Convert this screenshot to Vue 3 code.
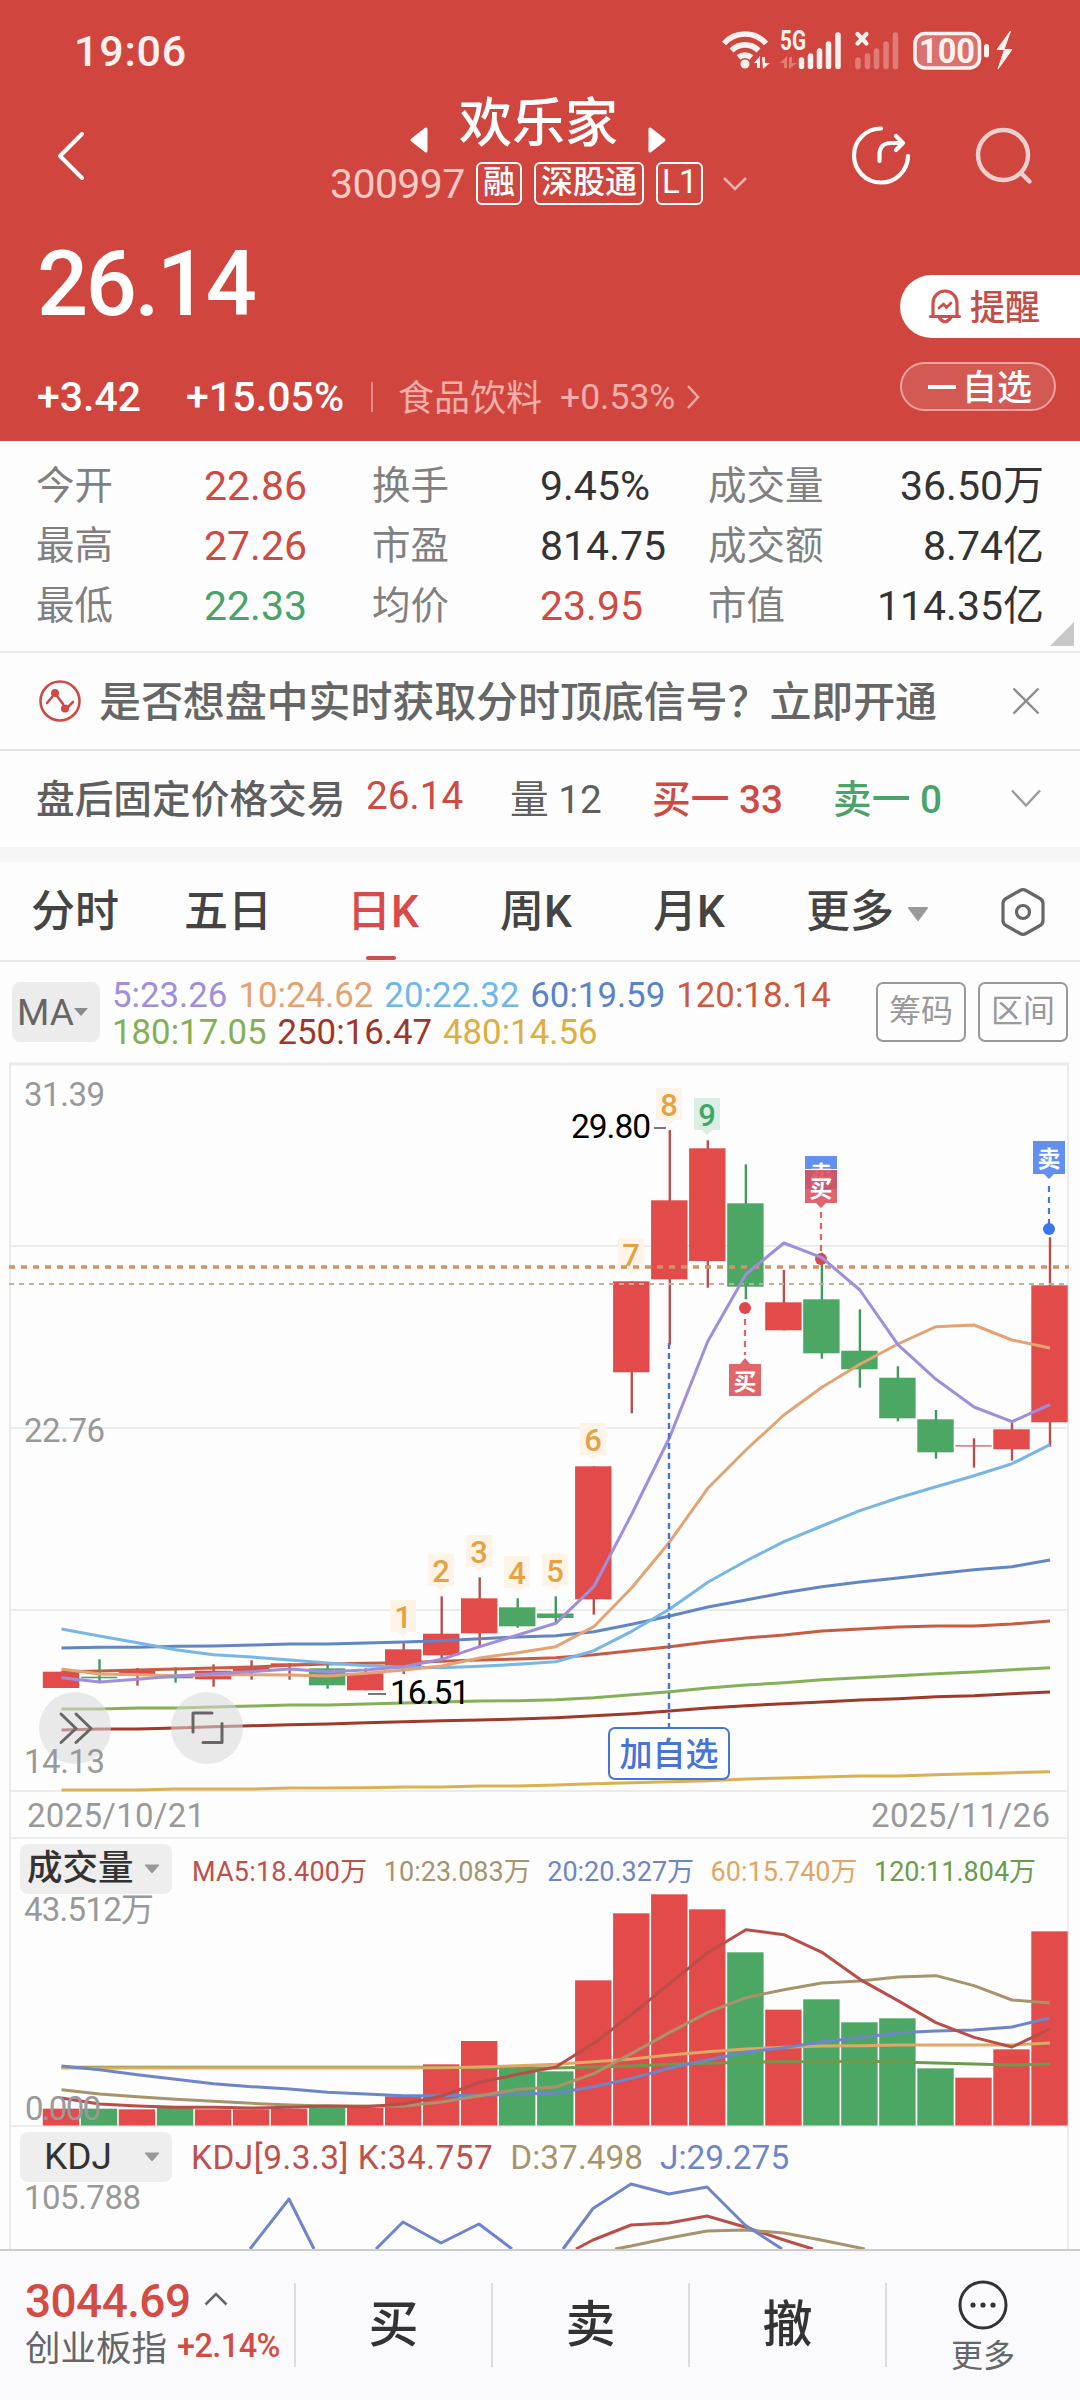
<template>
  <div class="page">
    <header class="hero">
      <div class="statusbar">
        <span class="clock">19:06</span>
        <svg class="status-icons" width="302" height="60" viewBox="0 0 302 60">
          <g fill="none" stroke="#fff1ef" stroke-width="5.6">
            <path d="M4 23.500a28 28 0 0 1 42 0" />
            <path d="M11.500 30.500a19 19 0 0 1 27 0" />
            <path d="M18.500 37.500a10 10 0 0 1 13 0" />
          </g>
          <circle cx="25" cy="44" r="4.500" fill="#fff1ef" />
          <path d="M34 43l6-7v12h-3v-5zM42 37h3v6h5l-7 6z" fill="#fff1ef" />
          <text x="60" y="30" class="net" textLength="26" lengthAdjust="spacingAndGlyphs">5G</text>
          <path d="M60 43l7-7v12h-3v-5zM69 37h3v6h5l-8 6z" fill="#e17b75" />
          <g stroke="#fff1ef" stroke-width="5.500" stroke-linecap="round">
            <path d="M81.500 40v6.500M90.500 36v10.500M99.500 31v15.500M108.500 24v22.500M118 15v31.500" />
          </g>
          <path d="M137.500 14l9 9.500M146.500 14l-9 9.500" stroke="#fff1ef" stroke-width="4.200" stroke-linecap="round" />
          <g stroke="#e17b75" stroke-width="5.500" stroke-linecap="round">
            <path d="M138 40v6.500M147.500 36v10.500M156.500 31v15.500M166 24v22.500M175.500 15v31.500" />
          </g>
          <rect x="195" y="13.500" width="64.500" height="34.500" rx="10" fill="#d9726c" stroke="#fff1ef" stroke-width="3.600" />
          <text x="199" y="42.500" class="bat" textLength="56" lengthAdjust="spacingAndGlyphs">100</text>
          <rect x="264" y="24" width="5" height="13.500" rx="2.500" fill="#fff1ef" />
          <path d="M290.500 11l-13.500 18.500h7.500l-6.500 19.500 14-19.500h-8z" fill="#fff1ef" stroke="#fff1ef" />
        </svg>
      </div>

      <div class="navbar">
        <svg class="back" width="32" height="54" viewBox="0 0 32 54">
          <path d="M27 5L5 27l22 22" fill="none" stroke="#fff" stroke-width="4" stroke-linecap="round" stroke-linejoin="round" />
        </svg>
        <div class="title">
          <div class="title-name">
            <svg width="20" height="30" viewBox="0 0 20 30"><path d="M17 4v22L3 15z" fill="#fff" stroke="#fff" stroke-width="3" stroke-linejoin="round" /></svg>
            <span>欢乐家</span>
            <svg width="20" height="30" viewBox="0 0 20 30"><path d="M3 4v22l14-11z" fill="#fff" stroke="#fff" stroke-width="3" stroke-linejoin="round" /></svg>
          </div>
          <div class="title-code">
            <span class="code">300997</span>
            <span class="tag">融</span>
            <span class="tag">深股通</span>
            <span class="tag latin">L1</span>
            <svg class="code-arrow" width="26" height="16" viewBox="0 0 26 16"><path d="M2 2l11 11L24 2" fill="none" stroke="#eeb1ad" stroke-width="2.500" /></svg>
          </div>
        </div>
        <svg class="share" width="60" height="60" viewBox="0 0 60 60">
          <g fill="none" stroke="#fff" stroke-width="4.200" stroke-linecap="round" stroke-linejoin="round">
            <path d="M31 3.500A27 27 0 1 0 58 31" />
            <path d="M29.500 36v-6q0-12 12-12h11M46 11l7 7-7 7" />
          </g>
        </svg>
        <svg class="search" width="60" height="60" viewBox="0 0 60 60">
          <g fill="none" stroke="#ecd0ce" stroke-width="4.400" stroke-linecap="round">
            <circle cx="29" cy="29" r="25" />
            <path d="M47 47l8.500 8.500" />
          </g>
        </svg>
      </div>

      <div class="quote">
        <div class="quote-left">
          <div class="price">26.14</div>
          <div class="change">
            <span class="chg">+3.42</span>
            <span class="pct">+15.05%</span>
            <i class="sep"></i>
            <span class="industry">食品饮料</span>
            <span class="industry-pct">+0.53%</span>
            <svg width="14" height="26" viewBox="0 0 14 26"><path d="M2 2l10 11L2 24" fill="none" stroke="#f2aaa6" stroke-width="2.500" /></svg>
          </div>
        </div>
        <div class="quote-right">
          <div class="alert">
            <svg width="34" height="38" viewBox="0 0 34 38">
              <g fill="none" stroke="#cd504b" stroke-width="3.200" stroke-linejoin="round" stroke-linecap="round">
                <path d="M2.500 28.500h29M5 28V15a12 12 0 0 1 24 0v13" />
                <path d="M11.500 30q5.500 7.500 11 0" />
                <path d="M11 20l4.500-4 3 3.500 4.500-4.500" stroke-width="2.800" />
              </g>
            </svg>
            <span>提醒</span>
          </div>
          <div class="fav"><i></i><span>自选</span></div>
        </div>
      </div>
    </header>

    <section class="stats">
      <template v-for="s in stats" :key="s.label">
        <span class="stat-label">{{ s.label }}</span>
        <span class="stat-value" :class="s.cls">{{ s.value }}</span>
      </template>
      <svg class="corner" width="24" height="24" viewBox="0 0 24 24"><path d="M24 0v24H0z" fill="#c8c8c8" /></svg>
    </section>

    <section class="notice">
      <svg width="42" height="42" viewBox="0 0 42 42">
        <g fill="none" stroke="#cf4a46" stroke-width="2.600" stroke-linecap="round">
          <circle cx="21" cy="21" r="19.500" />
          <path d="M8 23l5-6M18 16l6 8M29 27l5-5" />
        </g>
        <circle cx="16" cy="13" r="4" fill="#cf4a46" />
        <circle cx="26" cy="28.500" r="4" fill="#cf4a46" />
      </svg>
      <span class="notice-text">是否想盘中实时获取分时顶底信号？立即开通</span>
      <svg width="28" height="28" viewBox="0 0 28 28"><path d="M1.500 1.500l25 25M26.500 1.500l-25 25" stroke="#8c8c8c" stroke-width="2.400" /></svg>
    </section>

    <section class="after">
      <span class="after-name">盘后固定价格交易</span>
      <span class="after-price red">26.14</span>
      <span class="after-vol">量 12</span>
      <span class="after-buy red">买一 33</span>
      <span class="after-sell green">卖一 0</span>
      <svg width="30" height="20" viewBox="0 0 30 20"><path d="M1 1.500l14 15 14-15" fill="none" stroke="#9a9a9a" stroke-width="2.400" /></svg>
    </section>

    <nav class="tabs">
      <span v-for="t in tabs" :key="t" class="tab" :class="{ active: t === '日K' }">{{ t }}</span>
      <svg class="tab-arrow" width="22" height="14" viewBox="0 0 22 14"><path d="M2 1h18l-9 12z" fill="#999" stroke="#999" stroke-width="2" stroke-linejoin="round" /></svg>
      <svg class="gear" width="46" height="50" viewBox="0 0 46 50">
        <g fill="none" stroke="#666" stroke-width="3.200" stroke-linejoin="round">
          <path d="M20 3.500q3-1.700 6 0l14 8q3 1.700 3 5v17q0 3.300-3 5l-14 8q-3 1.700-6 0l-14-8q-3-1.700-3-5v-17q0-3.300 3-5z" />
          <circle cx="23" cy="25" r="6.500" />
        </g>
      </svg>
    </nav>

    <section class="ma">
      <div class="ma-select">MA<svg width="14" height="10" viewBox="0 0 14 10"><path d="M0 1h14L7 9z" fill="#8a8a8a" /></svg></div>
      <div class="ma-list">
        <span v-for="m in maList" :key="m.text" :style="{ color: m.color }">{{ m.text }}</span>
      </div>
      <span class="ma-btn">筹码</span>
      <span class="ma-btn">区间</span>
    </section>

    <!-- 主图 -->
    <svg class="chart" width="1080" height="776" viewBox="0 1063 1080 776">
      <g class="grid">
        <path d="M10 1064H1069" stroke-width="3" />
        <path d="M10 1246H1068M10 1428H1068M10 1610H1068M10 1791H1068M10 1838H1068M10 1063V1839M1068 1063V1839" />
      </g>
      <g v-for="(c, i) in candles" :key="i">
        <rect :x="cx(i) - 1.200" :y="c[3]" width="2.400" :height="c[4] - c[3]" :fill="c[0] ? '#b9504e' : '#419a59'" />
        <rect :x="cx(i) - 18.700" :y="c[1]" width="36.400" :height="c[2] - c[1]" :fill="c[0] ? '#e34a4a' : '#4ca765'" />
      </g>
      <g v-for="f in flags" :key="f.n">
        <path :d="`M${f.x - 13} ${f.y}h26v32h-8l-5 5-5-5h-8z`" :fill="f.n === 9 ? '#d9efe2' : '#fdf4e7'" />
        <text :x="f.x" :y="f.y + 28" class="flag" :fill="f.n === 9 ? '#41a662' : '#e5a245'">{{ f.n }}</text>
      </g>
      <path d="M9 1267H1069" stroke="#d39464" stroke-width="3.400" stroke-dasharray="6 6" />
      <path d="M9 1284H1069" stroke="#c0b294" stroke-width="2" stroke-dasharray="5 5" />
      <circle cx="821" cy="1259" r="6" fill="#d9484b" />
      <path d="M821 1212v44" class="dash" stroke="#d9666a" />
      <polyline v-for="l in maLines" :key="l.color" :points="line(l.y)" :stroke="l.color" class="line" />

      <path d="M669 1343V1727" stroke="#4674d8" stroke-width="2.400" stroke-dasharray="6 4" />
      <rect x="609" y="1728" width="120" height="51" rx="6" fill="#fff" stroke="#4674d8" stroke-width="2" />
      <text x="669" y="1766" class="added" text-anchor="middle">加自选</text>

      <path d="M654 1128h12" stroke="#777" stroke-width="2" />
      <text x="571" y="1138" class="peak" textLength="80">29.80</text>
      <path d="M368 1694h18" stroke="#777" stroke-width="2" />
      <text x="390" y="1704" class="peak" textLength="80">16.51</text>

      <path d="M805 1156h32v33h-32z" fill="#628ff0" />
      <text x="821" y="1182" class="mark">卖</text>
      <path d="M805 1170h32v33h-11l-5 5-5-5h-11z" fill="#d9505a" fill-opacity=".88" />
      <text x="821" y="1197" class="mark">买</text>
      <path d="M805 1169.500h32" stroke="#fff" />
      <path d="M1033 1141h32v33h-11l-5 5-5-5h-11z" fill="#628ff0" />
      <text x="1049" y="1167" class="mark">卖</text>
      <path d="M1049 1186v38" class="dash" stroke="#4b79d0" />
      <circle cx="1049" cy="1229" r="6" fill="#3b76ee" />
      <circle cx="745" cy="1308" r="6" fill="#e0474b" />
      <path d="M745 1319v36" class="dash" stroke="#d9666a" />
      <path d="M729 1364h11l5-6 5 6h11v32h-32z" fill="#e0666b" />
      <text x="745" y="1390" class="mark">买</text>

      <g fill="#d8d8d8" fill-opacity=".55">
        <circle cx="75" cy="1728" r="36" />
        <circle cx="207" cy="1728" r="36" />
      </g>
      <g fill="none" stroke="#666" stroke-width="3" stroke-linecap="round" stroke-linejoin="round">
        <path d="M61 1714l15 14.500-15 14M76 1714l15 14.500-15 14" />
        <path d="M193 1732v-19h19M203 1742.500h19v-19" />
      </g>

      <text x="24" y="1106" class="axis" textLength="81">31.39</text>
      <text x="24" y="1442" class="axis" textLength="81">22.76</text>
      <text x="24" y="1773" class="axis" textLength="81">14.13</text>
      <text x="27" y="1827" class="axis" textLength="178">2025/10/21</text>
      <text x="871" y="1827" class="axis" textLength="179">2025/11/26</text>
    </svg>

    <!-- 成交量 -->
    <section class="panel">
      <div class="panel-head">
        <div class="select"><span>成交量</span><svg width="16" height="10" viewBox="0 0 16 10"><path d="M1 1h14L8 9z" fill="#999" stroke="#999" stroke-linejoin="round" /></svg></div>
        <div class="vol-list">
          <span v-for="m in volList" :key="m.text" :style="{ color: m.color }">{{ m.text }}</span>
        </div>
      </div>
      <svg class="chart" width="1080" height="233" viewBox="0 1894 1080 233">
        <path class="grid" d="M10 1894V2127M1068 1894V2127M10 2126H1068" />
        <rect v-for="(v, i) in volumes" :key="i" :x="cx(i) - 18.700" :y="1830 + v / 3" width="36.400" :height="295.500 - v / 3" :fill="candles[i][0] ? '#e34a4a' : '#4ca765'" />
        <polyline v-for="l in volLines" :key="l.color" :points="volLine(l.y)" :stroke="l.color" class="line" />
        <text x="24" y="1921" class="axis" textLength="130">43.512万</text>
        <text x="25" y="2120" class="axis" textLength="76">0.000</text>
      </svg>
    </section>

    <!-- KDJ -->
    <section class="panel">
      <div class="panel-head">
        <div class="select kdj"><span>KDJ</span><svg width="16" height="10" viewBox="0 0 16 10"><path d="M1 1h14L8 9z" fill="#999" stroke="#999" stroke-linejoin="round" /></svg></div>
        <div class="kdj-list">
          <span class="k">KDJ[9.3.3] K:34.757</span>
          <span class="d">D:37.498</span>
          <span class="j">J:29.275</span>
        </div>
      </div>
      <svg class="chart" width="1080" height="67" viewBox="0 2182 1080 67">
        <path class="grid" d="M10 2182V2249M1068 2182V2249" />
        <g class="line">
          <path d="M576 2249L593 2240 631 2225 669 2223 707 2216 745 2227 784 2240 813 2249" stroke="#b8504a" />
          <path d="M615 2249L631 2246 669 2238 707 2231 745 2230 784 2233 821 2240 865 2249" stroke="#a8946c" />
          <path d="M250 2249L289 2199 314 2249M376 2249L403 2222 441 2243 479 2224 512 2249M563 2249L593 2208.500 631 2184 669 2194 707 2187 745 2225 782 2249" stroke="#6f85c9" />
        </g>
        <text x="24" y="2209" class="axis" textLength="117">105.788</text>
      </svg>
    </section>

    <footer class="bottom">
      <div class="index">
        <div class="index-top">
          <span class="index-value">3044.69</span>
          <svg width="24" height="14" viewBox="0 0 24 14"><path d="M1.500 12.500L12 2l10.500 10.500" fill="none" stroke="#666" stroke-width="2.600" /></svg>
        </div>
        <div class="index-sub"><span>创业板指</span><b>+2.14%</b></div>
      </div>
      <div class="action">买</div>
      <div class="action">卖</div>
      <div class="action">撤</div>
      <div class="more">
        <svg width="50" height="50" viewBox="0 0 50 50">
          <circle cx="25" cy="25" r="23" fill="none" stroke="#333" stroke-width="3" />
          <g fill="#333"><circle cx="15" cy="25" r="2.600" /><circle cx="25" cy="25" r="2.600" /><circle cx="35" cy="25" r="2.600" /></g>
        </svg>
        <span>更多</span>
      </div>
    </footer>
  </div>
</template>

<script setup>
const stats = [
  { label: '今开', value: '22.86', cls: 'red' },
  { label: '换手', value: '9.45%' },
  { label: '成交量', value: '36.50万', cls: 'right' },
  { label: '最高', value: '27.26', cls: 'red' },
  { label: '市盈', value: '814.75' },
  { label: '成交额', value: '8.74亿', cls: 'right' },
  { label: '最低', value: '22.33', cls: 'green' },
  { label: '均价', value: '23.95', cls: 'red' },
  { label: '市值', value: '114.35亿', cls: 'right' }
];

const tabs = ['分时', '五日', '日K', '周K', '月K', '更多'];

const maList = [
  { text: '5:23.26', color: '#a18edb' },
  { text: '10:24.62', color: '#e3a36f' },
  { text: '20:22.32', color: '#6fb7e6' },
  { text: '60:19.59', color: '#5b83c9' },
  { text: '120:18.14', color: '#cd5a3c' },
  { text: '180:17.05', color: '#84b150' },
  { text: '250:16.47', color: '#9f3626' },
  { text: '480:14.56', color: '#dfae41' }
];

const volList = [
  { text: 'MA5:18.400万', color: '#c14f48' },
  { text: '10:23.083万', color: '#a8946c' },
  { text: '20:20.327万', color: '#6f85c9' },
  { text: '60:15.740万', color: '#dfa765' },
  { text: '120:11.804万', color: '#6b9c4c' }
];

// 每根K线的中心x
const cx = (i) => Math.round((61.5 + i * 38.02) * 10) / 10;
const line = (ys) => ys.map((y, i) => `${cx(i)},${y}`).join(' ');
const volLine = (ys) => ys.map((y, i) => `${cx(i)},${1830 + y / 3}`).join(' ');

// [涨, 实体上, 实体下, 影线上, 影线下]
const candles = [
  [1, 1671.7, 1688, 1671.7, 1688],
  [0, 1676.7, 1678.3, 1659.3, 1683.3],
  [1, 1670.7, 1676, 1668, 1685.7],
  [0, 1676.7, 1678.3, 1667.3, 1682.7],
  [1, 1670.7, 1679.3, 1664.3, 1686.7],
  [1, 1666, 1671.3, 1660.3, 1679.7],
  [1, 1663.3, 1665.3, 1663.3, 1679.7],
  [0, 1668.3, 1685.3, 1664.7, 1688.7],
  [1, 1673.3, 1690.3, 1668.3, 1690.3],
  [1, 1649.3, 1666.7, 1642.3, 1674],
  [1, 1633.7, 1655.3, 1596.3, 1659.3],
  [1, 1598.3, 1633.3, 1577.3, 1646.7],
  [0, 1607.3, 1626.3, 1598.3, 1627.7],
  [0, 1613.5, 1618, 1596.3, 1622],
  [1, 1466.3, 1599.3, 1466.3, 1614.7],
  [1, 1281.3, 1372.3, 1281.3, 1413.3],
  [1, 1200.3, 1279.3, 1130, 1344.7],
  [1, 1148.3, 1261, 1140.3, 1287.7],
  [0, 1203.3, 1286.7, 1164.3, 1299.3],
  [1, 1302.3, 1330.3, 1270, 1330.3],
  [0, 1299.3, 1353.3, 1252.7, 1358.7],
  [0, 1350.7, 1369.3, 1309.3, 1387.7],
  [0, 1377.7, 1418.3, 1366.3, 1421.3],
  [0, 1419.3, 1452.3, 1410, 1458.7],
  [1, 1445.3, 1446.5, 1438.3, 1467.7],
  [1, 1429.3, 1449.3, 1422.3, 1460.7],
  [1, 1285.3, 1422.3, 1237.3, 1446.7]
];

const flags = [
  { n: 1, x: 403, y: 1600 },
  { n: 2, x: 441, y: 1554 },
  { n: 3, x: 479, y: 1535 },
  { n: 4, x: 517, y: 1556 },
  { n: 5, x: 555, y: 1554 },
  { n: 6, x: 593, y: 1423 },
  { n: 7, x: 631, y: 1238 },
  { n: 8, x: 669, y: 1088 },
  { n: 9, x: 707, y: 1098 }
];

const maLines = [
  { color: '#d9b152', y: [1790, 1790, 1790, 1789, 1789, 1789, 1788, 1788, 1787.7, 1787, 1787, 1786, 1786, 1785, 1783.7, 1782.7, 1781.7, 1780.7, 1779, 1778, 1777, 1776, 1776, 1774.7, 1773.7, 1772.7, 1771.7] },
  { color: '#9f3a2b', y: [1730, 1729, 1729, 1728, 1726.7, 1725.7, 1724.7, 1724, 1722.7, 1721.7, 1720.7, 1720, 1719, 1717.7, 1715.7, 1713.7, 1711, 1708, 1705.7, 1703.7, 1702, 1700, 1698.7, 1696.7, 1695.7, 1693.7, 1692] },
  { color: '#86b057', y: [1709, 1709, 1708, 1708, 1707, 1706, 1705, 1705, 1704, 1703, 1702, 1701, 1700.7, 1699.7, 1697.7, 1694.7, 1691.7, 1688, 1685, 1682.7, 1679.7, 1677.7, 1675.7, 1673.7, 1672, 1669.7, 1667.7] },
  { color: '#c75c43', y: [1671.7, 1671, 1670, 1669, 1668, 1667, 1665.3, 1664, 1663.3, 1662.7, 1661.3, 1660, 1659, 1657.7, 1654.7, 1650.7, 1646.7, 1642, 1638, 1635, 1631, 1629, 1627, 1626, 1626, 1624, 1621] },
  { color: '#6286c4', y: [1648, 1647.3, 1647.3, 1646.3, 1646, 1645, 1644, 1644, 1643, 1642, 1640.7, 1638.7, 1637, 1635.7, 1631.7, 1624.3, 1616, 1607, 1600, 1592.7, 1586.7, 1582, 1578, 1573.7, 1569.7, 1566.7, 1560] },
  { color: '#78b7e3', y: [1629, 1636, 1642.7, 1649.7, 1654.7, 1657, 1660, 1663, 1665.7, 1667.3, 1667.7, 1666.3, 1664.3, 1661.7, 1650.7, 1631.3, 1609, 1582.3, 1561, 1541.7, 1526, 1510.7, 1498, 1486.7, 1475.7, 1463.7, 1444.7] },
  { color: '#e3a375', y: [1669, 1674, 1674.7, 1675.7, 1674.7, 1674.7, 1675, 1676, 1673.3, 1670, 1666, 1658, 1652.7, 1646.7, 1626.7, 1587.7, 1541.7, 1488.3, 1450, 1415, 1387.3, 1364.3, 1344, 1326.7, 1325, 1340, 1348] },
  { color: '#a18edb', y: [1677.7, 1682, 1679.3, 1676, 1673.7, 1671.7, 1669, 1671.7, 1670, 1666.7, 1659.3, 1646.7, 1635, 1623.3, 1586.7, 1514, 1437, 1341.3, 1274.3, 1243, 1257.7, 1290, 1344.7, 1379.3, 1407, 1421.7, 1404.7] }
];

const volumes = [836, 836, 838, 834, 838, 838, 836, 832, 834, 799, 703, 633, 709, 724, 451, 250, 193, 238, 367, 539, 508, 577, 565, 715, 743, 658, 304];

const volLines = [
  { color: '#6f9a4e', y: [712, 712, 712, 712, 712, 712, 712, 712, 712, 712, 712, 713, 714, 714, 711, 708, 703, 700, 697, 695, 695, 693, 696, 699, 702, 705, 702] },
  { color: '#e0a866', y: [714, 714, 714, 714, 714, 714, 714, 714, 714, 714, 713, 711, 707, 703, 695, 687, 675, 665, 657, 652, 648, 647, 645, 645, 645, 645, 639] },
  { color: '#6f85c9', y: [708, 719, 734, 748, 761, 770, 777, 787, 792, 797, 797, 796, 793, 789, 770, 745, 714, 690, 667, 653, 635, 623, 608, 603, 600, 591, 564] },
  { color: '#a8946c', y: [779, 792, 800, 808, 814, 820, 825, 828, 828, 828, 816, 797, 778, 771, 731, 670, 607, 547, 503, 479, 459, 453, 441, 437, 467, 510, 519] },
  { color: '#b94e49', y: [804, 822, 828, 832, 832, 834, 832, 828, 830, 822, 798, 757, 733, 711, 640, 553, 460, 368, 299, 314, 367, 448, 512, 578, 622, 651, 597] }
];
</script>

<style>
body {
  margin: 0;
  background: #fdfdfd;
}
</style>

<style scoped>
.page {
  width: 1080px;
  height: 2400px;
  overflow: hidden;
  display: flex;
  flex-direction: column;
  background: #fdfdfd;
  color: #333;
  font-family: Roboto, "Noto Sans CJK SC", sans-serif;
  white-space: nowrap;
}

.page svg {
  display: block;
  flex: none;
}

.chart {
  overflow: visible;
}

.red {
  color: #cf4a43;
}

.green {
  color: #4aa368;
}

.hero {
  height: 441px;
  background: #d0463e;
  color: #fff;
}

.statusbar {
  height: 92px;
  box-sizing: border-box;
  padding: 8px 68px 0 74px;
  display: flex;
  align-items: center;
  justify-content: space-between;
}

.clock {
  padding-top: 2px;
  font-size: 43px;
  font-weight: 500;
  letter-spacing: 0.8px;
  color: #fff1ef;
}

.status-icons {
  margin-right: -10px;
}

.net {
  font-size: 27px;
  font-weight: 700;
  fill: #fff1ef;
}

.bat {
  font-size: 35px;
  font-weight: 700;
  fill: #fff1ef;
}

.navbar {
  height: 120px;
  display: flex;
  align-items: flex-start;
}

.back {
  margin: 37px 0 0 55px;
}

.title {
  flex: 1;
}

.title-name {
  display: flex;
  align-items: center;
  margin-left: 322px;
  height: 64px;
}

.title-name svg {
  margin-top: 31px;
}

.title-name span {
  width: 160px;
  margin: -1px 28px 0 30px;
  font-size: 53px;
  line-height: 60px;
  font-weight: 500;
}

.title-code {
  display: flex;
  align-items: center;
  margin: 6px 0 0 243px;
  height: 43px;
}

.code {
  width: 146px;
  font-size: 41px;
  letter-spacing: -0.6px;
  color: #f9c9c5;
}

.tag {
  height: 39px;
  line-height: 36px;
  margin-right: 12px;
  padding: 0 5px;
  border: 2px solid #fff;
  border-radius: 6px;
  font-size: 32px;
  font-weight: 500;
}

.tag.latin {
  padding: 0 4px;
  letter-spacing: -0.8px;
  font-size: 33px;
  font-weight: 400;
}

.code-arrow {
  margin-left: 7px;
}

.share {
  margin: 33px 64px 0 0;
}

.search {
  margin: 34px 46px 0 0;
}

.quote {
  height: 229px;
  display: flex;
  justify-content: space-between;
}

.quote-left {
  padding: 22px 0 0 37px;
}

.price {
  height: 100px;
  line-height: 102px;
  font-size: 90px;
  font-weight: 500;
  letter-spacing: -2.4px;
}

.change {
  display: flex;
  align-items: center;
  height: 50px;
  margin-top: 38px;
  font-size: 41px;
  font-weight: 500;
}

.chg {
  width: 149px;
}

.pct {
  width: 185px;
  letter-spacing: 0.1px;
}

.sep {
  width: 2px;
  height: 30px;
  margin-right: 25px;
  background: #e58a85;
}

.industry {
  width: 162px;
  margin-top: -5px;
  font-size: 36px;
  font-weight: 400;
  color: #f4aeaa;
}

.industry-pct {
  width: 126px;
  font-size: 35.5px;
  font-weight: 400;
  color: #f4aeaa;
}

.quote-right {
  width: 180px;
  padding-top: 63px;
}

.alert {
  display: flex;
  align-items: center;
  height: 63px;
  padding-left: 28px;
  border-radius: 32px 0 0 32px;
  background: #fff;
  font-size: 35px;
  font-weight: 500;
  color: #c44d48;
}

.alert span {
  margin: -4px 0 0 8px;
}

.fav {
  display: flex;
  align-items: center;
  box-sizing: border-box;
  width: 156px;
  height: 49px;
  margin-top: 24px;
  padding-left: 26px;
  border: 2px solid #efa29e;
  border-radius: 25px;
  background: #d35953;
  font-size: 35px;
  font-weight: 500;
}

.fav i {
  width: 28px;
  height: 4px;
  margin-right: 6px;
  background: #fff;
}

.fav span {
  margin-top: -4px;
}

.stats {
  position: relative;
  box-sizing: border-box;
  height: 212px;
  padding: 15px 36px 0;
  border-bottom: 2px solid #e9e9e9;
  display: grid;
  grid-template-columns: 168px 168px 168px 168px 120px 216px;
  grid-auto-rows: 60px;
  line-height: 60px;
}

.stat-label {
  font-size: 38.5px;
  color: #808080;
}

.stat-value {
  font-size: 41px;
}

.stat-value.right {
  text-align: right;
}

.corner {
  position: absolute;
  right: 6px;
  bottom: 5px;
}

.notice {
  box-sizing: border-box;
  height: 98px;
  border-bottom: 2px solid #e3e3e3;
  padding: 0 40px 0 39px;
  display: flex;
  align-items: center;
}

.notice-text {
  flex: 1;
  margin: -6px 0 0 18px;
  font-size: 42px;
  font-weight: 500;
  letter-spacing: -0.1px;
  color: #666;
}

.after {
  height: 96px;
  border-bottom: 15px solid #f6f6f6;
  padding: 0 39px 0 36px;
  display: flex;
  align-items: center;
  font-size: 38.7px;
  color: #5f5f5f;
}

.after span {
  margin-top: -7px;
}

.after .red {
  color: #cf4a43;
}

.after .green {
  color: #4aa368;
}

.after-name {
  width: 330px;
  font-weight: 500;
}

.after-price {
  width: 144px;
}

.after-vol {
  width: 142px;
}

.after-buy,
.after-sell {
  width: 181px;
  font-weight: 500;
}

.after-sell {
  flex: 1;
}

.tabs {
  box-sizing: border-box;
  height: 100px;
  border-bottom: 2px solid #e8e8e8;
  padding-left: 31px;
  display: flex;
  align-items: center;
}

.tab {
  position: relative;
  height: 98px;
  line-height: 100px;
  margin-right: 65px;
  font-size: 44px;
  font-weight: 500;
  color: #444;
}

.tab:nth-child(2) {
  margin-right: 75px;
}

.tab:nth-child(3),
.tab:nth-child(4),
.tab:nth-child(5) {
  width: 73px;
  margin-right: 80px;
}

.tab:nth-child(6) {
  margin-right: 13px;
}

.tab.active {
  color: #d94a4a;
}

.tab.active::after {
  content: "";
  position: absolute;
  left: 19px;
  bottom: 0;
  width: 30px;
  height: 4px;
  border-radius: 2px;
  background: #c9504f;
}

.tab-arrow {
  margin-top: 6px;
}

.gear {
  margin: 1px 34px 0 auto;
}

.ma {
  box-sizing: border-box;
  height: 101px;
  padding: 20px 12px 0;
  display: flex;
  align-items: flex-start;
}

.ma-select {
  display: flex;
  align-items: center;
  box-sizing: border-box;
  width: 88px;
  height: 60px;
  padding-left: 5px;
  border-radius: 8px;
  background: #ececec;
  font-size: 37px;
  color: #666;
}

.ma-list {
  display: flex;
  flex-wrap: wrap;
  column-gap: 11px;
  width: 764px;
  margin: -5px 0 0 12px;
  line-height: 37px;
  font-size: 34.8px;
}

.ma-btn {
  box-sizing: border-box;
  width: 90px;
  height: 60px;
  margin-right: 12px;
  border: 2px solid #999;
  border-radius: 7px;
  text-align: center;
  line-height: 54px;
  font-size: 32px;
  color: #999;
}

.ma-btn:last-child {
  margin-right: 0;
}

.grid {
  fill: none;
  stroke: #ebebeb;
  stroke-width: 2;
}

.line {
  fill: none;
  stroke-width: 3;
  stroke-linejoin: round;
}

.dash {
  stroke-width: 2.2;
  stroke-dasharray: 6 5;
}

.flag {
  font-size: 31px;
  font-weight: 500;
  text-anchor: middle;
}

.mark {
  font-size: 23px;
  font-weight: 700;
  text-anchor: middle;
  fill: #fff;
}

.added {
  font-size: 33px;
  font-weight: 500;
  fill: #4674d8;
}

.peak {
  font-size: 33.5px;
  fill: #000;
}

.axis {
  font-size: 33px;
  fill: #999;
}

.panel-head {
  display: flex;
  box-sizing: border-box;
  height: 55px;
  margin: 0 11px 0 9px;
  padding: 5px 0 0 9px;
  border-left: 2px solid #ebebeb;
  border-right: 2px solid #ebebeb;
}

.select {
  display: flex;
  align-items: center;
  justify-content: space-between;
  box-sizing: border-box;
  width: 152px;
  height: 50px;
  padding: 0 12px 0 7px;
  border-radius: 8px;
  background: #eee;
  font-size: 35.5px;
  line-height: 44px;
}

.select span {
  margin-top: -2px;
  font-weight: 500;
}

.select.kdj {
  padding-left: 24px;
}

.select.kdj span {
  margin-top: 0;
  font-size: 37px;
  font-weight: 400;
}

.vol-list {
  display: flex;
  gap: 16.5px;
  margin-left: 20px;
  line-height: 57px;
  font-size: 27px;
}

.vol-list span:first-child {
  letter-spacing: 0.2px;
}

.kdj-list {
  display: flex;
  gap: 17px;
  margin-left: 19px;
  line-height: 52px;
  font-size: 33.4px;
}

.k {
  color: #c0504a;
  letter-spacing: 0.5px;
}

.d {
  color: #a8946c;
}

.j {
  color: #6f85c9;
}

.bottom {
  box-sizing: border-box;
  position: relative;
  height: 151px;
  border-top: 2px solid #cdcdcf;
  background: #fafafd;
  display: flex;
}

.index {
  box-sizing: border-box;
  width: 294px;
  padding: 22px 0 0 25px;
}

.index-top {
  display: flex;
  align-items: center;
  height: 56px;
}

.index-value {
  width: 179px;
  font-size: 46px;
  letter-spacing: -0.6px;
  font-weight: 500;
  color: #d34c44;
}

.index-top svg {
  margin-top: -5px;
}

.index-sub {
  display: flex;
  align-items: center;
  height: 40px;
  margin-top: -4px;
  font-size: 35.5px;
  color: #666;
}

.index-sub b {
  margin: 2px 0 0 10px;
  font-size: 32.5px;
  font-weight: 500;
  letter-spacing: -0.6px;
  color: #d34c44;
}

.action,
.more {
  height: 84px;
  width: 197px;
  box-sizing: border-box;
  margin-top: 32px;
  border-left: 2px solid #dcdce0;
  text-align: center;
}

.action {
  line-height: 84px;
  font-size: 50px;
  font-weight: 500;
}

.more {
  display: flex;
  flex-direction: column;
  align-items: center;
  width: 194px;
  font-size: 32px;
  line-height: 40px;
  color: #666;
}

.more svg {
  margin-top: -3px;
}

.more span {
  margin-top: 6px;
}
</style>
